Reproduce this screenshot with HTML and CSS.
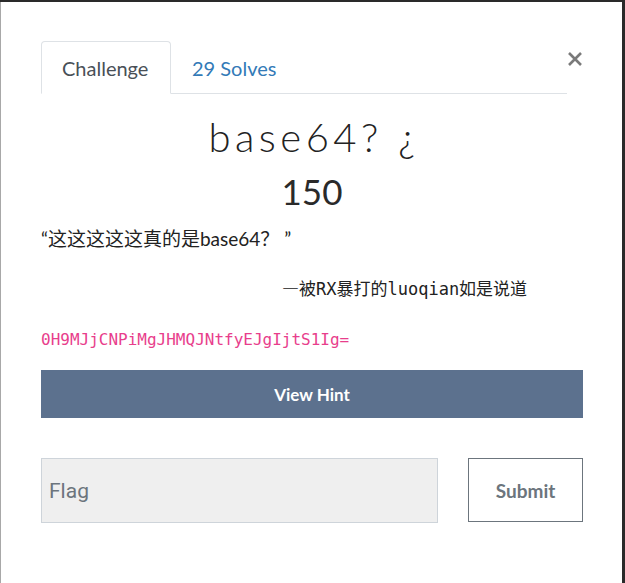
FILE: index.html
```html
<!DOCTYPE html>
<html lang="zh">
<head>
<meta charset="utf-8">
<title>base64? ¿</title>
<link rel="stylesheet" href="styles.css">
</head>
<body>
<div class="modal">
  <div class="modal-header">
    <ul class="nav-tabs">
      <li class="tab active">Challenge</li>
      <li class="tab link">29 Solves</li>
    </ul>
    <button class="close" aria-label="Close">
      <svg width="16" height="16" viewBox="0 0 16 16"><path d="M2 2 L14 14 M14 2 L2 14" stroke="#7a7a7a" stroke-width="2.6" stroke-linecap="butt"/></svg>
    </button>
  </div>
  <h2 class="title">base64? ¿</h2>
  <h3 class="value">150</h3>
  <p class="quote">“这这这这这真的是base64？ ”</p>
  <p class="author"><span class="dash">—</span>被RX暴打的luoqian如是说道</p>
  <p class="code">0H9MJjCNPiMgJHMQJNtfyEJgIjtS1Ig=</p>
  <button class="hint">View Hint</button>
  <div class="submit-row">
    <input class="flag" type="text" placeholder="Flag">
    <button class="submit">Submit</button>
  </div>
</div>
</body>
</html>
```

FILE: styles.css
```css
html, body {
  margin: 0;
  padding: 0;
}
body {
  background: #2a2a2a;
  width: 625px;
  height: 583px;
  overflow: hidden;
  font-family: Lato, "Noto Sans CJK SC", sans-serif;
}
.modal {
  margin: 2px 3px 0 0;
  height: 581px;
  box-sizing: border-box;
  background: #ffffff;
  border-left: 1px solid #a8a8a8;
  padding: 39px 39px 0 40px;
}
.modal-header {
  display: flex;
  align-items: flex-start;
}
.nav-tabs {
  flex: 1;
  display: flex;
  list-style: none;
  margin: 0;
  padding: 0;
  border-bottom: 1px solid #dee2e6;
}
.tab {
  height: 51px;
  box-sizing: border-box;
  padding: 0 20px;
  font-size: 20px;
  line-height: 53px;
  margin-bottom: -1px;
  border: 1px solid transparent;
  border-radius: 4px 4px 0 0;
}
.tab.active {
  width: 130px;
  height: 53px;
  color: #495057;
  background: #fff;
  border-color: #dee2e6 #dee2e6 #fff;
}
.tab.link {
  color: #337ab7;
}
.close {
  margin: 10px 0 0 0;
  padding: 0;
  width: 16px;
  height: 16px;
  border: 0;
  background: none;
  display: flex;
}
.title {
  margin: 24px 0 0;
  padding-left: 4px;
  font-size: 40px;
  line-height: 38px;
  font-weight: 300;
  letter-spacing: 4.5px;
  color: #222;
  text-align: center;
}
.value {
  margin: 18px 0 0;
  font-size: 35px;
  line-height: 35px;
  font-weight: 400;
  color: #2a2a2a;
  text-align: center;
}
.quote {
  margin: 18px 0 0;
  font-size: 19px;
  line-height: 24px;
  color: #222;
}
.author {
  margin: 26px 0 0;
  padding-left: 241px;
  font-family: "DejaVu Sans Mono", "Noto Sans CJK SC", monospace;
  font-size: 17px;
  line-height: 22px;
  color: #222;
}
.dash {
  font-family: "Noto Sans CJK SC", sans-serif;
}
.code {
  margin: 29px 0 0;
  font-family: "DejaVu Sans Mono", monospace;
  font-size: 16px;
  line-height: 22px;
  color: #e83e8c;
}
.hint {
  display: block;
  width: 100%;
  height: 48px;
  margin: 19px 0 0;
  border: 0;
  background: #5c718e;
  color: #fff;
  font-family: Lato, sans-serif;
  font-weight: 700;
  font-size: 17px;
}
.submit-row {
  display: flex;
  gap: 30px;
  margin-top: 40px;
}
.flag {
  flex: 1;
  height: 65px;
  box-sizing: border-box;
  margin: 0;
  padding: 0 7px;
  background: #efefef;
  border: 1px solid #ced4da;
  font-family: Roboto, "Liberation Sans", sans-serif;
  font-size: 21px;
  color: #495057;
}
.flag::placeholder {
  color: #6c757d;
}
.submit {
  width: 115px;
  height: 64px;
  box-sizing: border-box;
  margin: 0;
  border: 1px solid #6c757d;
  background: #fff;
  color: #6c757d;
  font-family: Lato, sans-serif;
  font-weight: 700;
  font-size: 19px;
}
```
